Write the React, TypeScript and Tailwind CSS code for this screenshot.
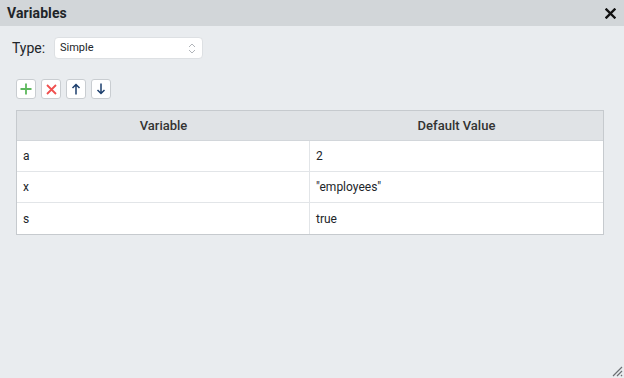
import React from 'react';

const rows = [
  { name: 'a', value: '2' },
  { name: 'x', value: '"employees"' },
  { name: 's', value: 'true' },
];

const ToolButton: React.FC<{ children: React.ReactNode }> = ({ children }) => (
  <button className="w-[20px] h-[20px] flex items-center justify-center bg-white border border-[#c9cdd1] rounded-[3px]">
    {children}
  </button>
);

const App: React.FC = () => {
  return (
    <div className="w-[624px] h-[378px] bg-[#e9ecef] flex flex-col relative overflow-hidden" style={{ fontFamily: 'Roboto, "Liberation Sans", sans-serif' }}>
      {/* Header */}
      <div className="h-[26px] bg-[#d2d6d9] flex items-center justify-between pl-[7px] pr-[8px]">
        <span className="text-[14px] font-bold text-[#212529] tracking-[0.1px]">Variables</span>
        <svg width="11" height="11" viewBox="0 0 11 11">
          <path d="M1.5 1.5 L9.5 9.5 M9.5 1.5 L1.5 9.5" stroke="#111" strokeWidth="2.4" strokeLinecap="square" />
        </svg>
      </div>

      {/* Body */}
      <div className="flex flex-col px-[16px]">
        <div className="flex items-center mt-[11px] -ml-[4px]">
          <span className="text-[14px] text-[#212529] w-[42px]">Type:</span>
          <div className="w-[149px] h-[22px] bg-white rounded-[4px] border border-[#dde0e3] flex items-center justify-between pl-[5px] pr-[6px]">
            <span className="text-[11px] text-[#212529]">Simple</span>
            <svg width="8" height="11" viewBox="0 0 8 11">
              <path d="M1 4 L4 1 L7 4 M1 7 L4 10 L7 7" stroke="#a8adb2" strokeWidth="0.9" fill="none" />
            </svg>
          </div>
        </div>

        <div className="flex gap-[5px] mt-[20px]">
          <ToolButton>
            <svg width="12" height="12" viewBox="0 0 12 12">
              <path d="M6 0.5 V11.5 M0.5 6 H11.5" stroke="#5cb85c" strokeWidth="1.8" />
            </svg>
          </ToolButton>
          <ToolButton>
            <svg width="11" height="11" viewBox="0 0 11 11">
              <path d="M1 1 L10 10 M10 1 L1 10" stroke="#f0504f" strokeWidth="1.8" />
            </svg>
          </ToolButton>
          <ToolButton>
            <svg width="10" height="12" viewBox="0 0 10 12">
              <path d="M5 11.5 V1.5 M1.5 5 L5 1.5 L8.5 5" stroke="#1d3f6e" strokeWidth="1.5" fill="none" />
            </svg>
          </ToolButton>
          <ToolButton>
            <svg width="10" height="12" viewBox="0 0 10 12">
              <path d="M5 0.5 V10.5 M1.5 7 L5 10.5 L8.5 7" stroke="#1d3f6e" strokeWidth="1.5" fill="none" />
            </svg>
          </ToolButton>
        </div>

        <div className="mt-[11px] w-[588px] border border-[#c6cace] bg-white">
          <div className="grid grid-cols-[293px_1fr] h-[30px] bg-[#e0e3e6] border-b border-[#d2d6da]">
            <div className="flex items-center justify-center text-[13px] font-medium text-[#333]">Variable</div>
            <div className="flex items-center justify-center text-[13px] font-medium text-[#333]">Default Value</div>
          </div>
          {rows.map((r, i) => (
            <div key={r.name} className={`grid grid-cols-[293px_1fr] h-[31px] ${i < rows.length - 1 ? 'border-b border-[#e2e5e8]' : ''}`}>
              <div className="flex items-center pl-[6px] text-[12px] text-[#212529] border-r border-[#e2e5e8]">{r.name}</div>
              <div className="flex items-center pl-[6px] text-[12px] text-[#212529]">{r.value}</div>
            </div>
          ))}
        </div>
      </div>

      {/* Resize grip */}
      <svg className="absolute right-[1px] bottom-[1px]" width="12" height="12" viewBox="0 0 12 12">
        <path d="M11 2 L2 11 M11 6 L6 11 M11 10 L10 11" stroke="#6b6f73" strokeWidth="1.2" />
      </svg>
    </div>
  );
};

export default App;
